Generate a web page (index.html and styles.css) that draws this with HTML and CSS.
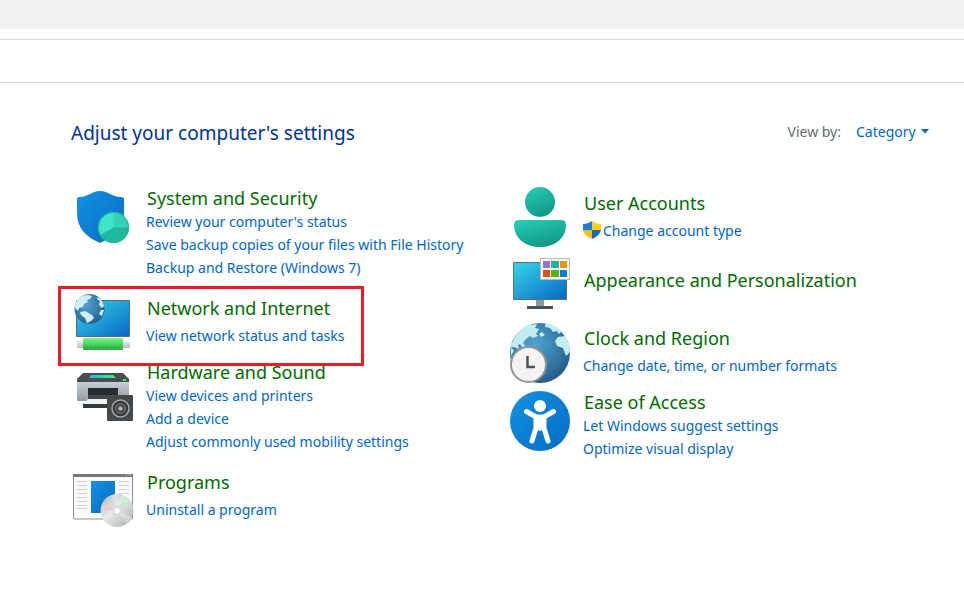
FILE: index.html
```html
<!DOCTYPE html>
<html lang="en">
<head>
    <meta charset="UTF-8">
    <meta name="viewport" content="width=device-width, initial-scale=1.0">
    <title>Control Panel</title>
    <link rel="stylesheet" href="styles.css">
</head>
<body>
    <div class="titlebar"></div>
    <div class="addressbar"></div>

    <main class="content">
        <header class="page-header">
            <h1>Adjust your computer's settings</h1>
            <div class="view-by">
                <label for="viewBy">View by:</label>
                <span class="select-wrap">
                    <select id="viewBy">
                        <option>Category</option>
                    </select>
                    <svg class="arrow" viewBox="0 0 8 5"><path d="M0 0h8L4 4.500z" fill="#0066cc"/></svg>
                </span>
            </div>
        </header>

        <div class="categories">
            <div class="column">
                <section class="category list">
                    <svg class="icon" viewBox="0 0 64 64">
                        <defs>
                            <linearGradient id="shieldBlue" x1="0" y1="0" x2="1" y2="1">
                                <stop offset="0" stop-color="#1493e2"/><stop offset="1" stop-color="#0669c3"/>
                            </linearGradient>
                            <clipPath id="pie"><circle cx="42.500" cy="43.500" r="15.500"/></clipPath>
                        </defs>
                        <path d="M6 15q0-2 2-2c10 0 12-6 21-6s11 6 21 6q3 0 3 2v14c0 15-10 24-24 30C15 53 6 44 6 29z" fill="url(#shieldBlue)"/>
                        <g clip-path="url(#pie)">
                            <rect x="26" y="27" width="33" height="33" fill="#3fe5c9"/>
                            <path d="M42.500 27v17H60V27z" fill="#35d2b7"/>
                            <path d="M26 53l16.500-9.500H60V61H26z" fill="#20b89f"/>
                        </g>
                        <circle cx="42.500" cy="43.500" r="15" fill="none" stroke="#25b59e"/>
                    </svg>
                    <div class="text">
                        <h2><a href="#">System and Security</a></h2>
                        <a href="#">Review your computer's status</a>
                        <a href="#">Save backup copies of your files with File History</a>
                        <a href="#">Backup and Restore (Windows 7)</a>
                    </div>
                </section>

                <section class="category highlighted">
                    <svg class="icon" viewBox="0 0 64 64">
                        <defs>
                            <linearGradient id="screen" x1="0" y1="0" x2="1" y2="1">
                                <stop offset="0" stop-color="#36d5e8"/><stop offset="1" stop-color="#0868c5"/>
                            </linearGradient>
                            <radialGradient id="globe" cx=".4" cy=".35" r=".7">
                                <stop offset="0" stop-color="#4fa3d0"/><stop offset=".6" stop-color="#357ca9"/><stop offset="1" stop-color="#225a83"/>
                            </radialGradient>
                            <linearGradient id="cable" x1="0" y1="0" x2="0" y2="1">
                                <stop offset="0" stop-color="#7cf08b"/><stop offset=".5" stop-color="#48d85c"/><stop offset="1" stop-color="#2fa943"/>
                            </linearGradient>
                            <linearGradient id="plug" x1="0" y1="0" x2="0" y2="1">
                                <stop offset="0" stop-color="#fff"/><stop offset="1" stop-color="#b9bcbc"/>
                            </linearGradient>
                        </defs>
                        <rect x="5" y="11" width="54" height="37" rx="1" fill="#587078"/>
                        <rect x="6" y="12" width="52" height="35" fill="url(#screen)"/>
                        <rect x="6" y="50" width="53" height="9" rx="1" fill="url(#plug)"/>
                        <rect x="12" y="49" width="40" height="12" rx="1" fill="url(#cable)"/>
                        <path d="M15 58h34" stroke="#2a9d3c" stroke-dasharray="2 2"/>
                        <circle cx="18.500" cy="20" r="15" fill="url(#globe)"/>
                        <path d="M4 19c0-6 3-10 8-12.500l5-.5 4 1-2 3-3 1 1 2-4 2-1 3-4 1-1 3zM9 23l5-1 7 4 2 3-3 3-4 2-2-5-4-3zM27 8c3 2 5 5 6 9l-2 2-3-3 1-4-3-2zM30 21l3 0-2 6-3-2z" fill="#d1eff8"/>
                    </svg>
                    <div class="text">
                        <h2><a href="#">Network and Internet</a></h2>
                        <a href="#">View network status and tasks</a>
                    </div>
                </section>

                <section class="category list">
                    <svg class="icon" viewBox="0 0 64 64">
                        <defs>
                            <linearGradient id="printerGlow"><stop offset="0" stop-color="#29b5dd"/><stop offset="1" stop-color="#43eb76"/></linearGradient>
                            <linearGradient id="printerBody" x1="0" y1="0" x2="0" y2="1"><stop offset="0" stop-color="#c7cdd2"/><stop offset="1" stop-color="#929ba3"/></linearGradient>
                        </defs>
                        <path d="M12 15h40l6 6v4H6v-4z" fill="#4a4e51"/>
                        <path d="M20 17h22l3 3H18z" fill="url(#printerGlow)"/>
                        <rect x="52" y="21" width="3" height="2" fill="#43ea60"/>
                        <path d="M6 24h52v18q0 1-1 1H7q-1 0-1-1z" fill="url(#printerBody)"/>
                        <path d="M17 30h30v12H17z" fill="#272c30"/>
                        <path d="M17 37h30v6H17z" fill="#42484c"/>
                        <path d="M12 45h36v5H12z" fill="#34393d"/>
                        <path d="M17 41h30v5H12z" fill="#eef0f1"/>
                        <rect x="36" y="37" width="26" height="26" rx="1" fill="#44484b"/>
                        <circle cx="49.500" cy="50.500" r="8.500" fill="#34383a" stroke="#a7abad" stroke-width="1.500"/>
                        <circle cx="49.500" cy="50.500" r="5" fill="#4a4f52" stroke="#73787b"/>
                        <circle cx="49.500" cy="50.500" r="2" fill="#b8bdbf"/>
                    </svg>
                    <div class="text">
                        <h2><a href="#">Hardware and Sound</a></h2>
                        <a href="#">View devices and printers</a>
                        <a href="#">Add a device</a>
                        <a href="#">Adjust commonly used mobility settings</a>
                    </div>
                </section>

                <section class="category">
                    <svg class="icon" viewBox="0 0 64 64">
                        <defs>
                            <linearGradient id="disc" x1="0" y1="0" x2="1" y2="1"><stop offset="0" stop-color="#b3b6b7"/><stop offset=".45" stop-color="#e7e9e9"/><stop offset="1" stop-color="#a8abac"/></linearGradient>
                        </defs>
                        <rect x="2.500" y="12" width="59" height="44" rx="1" fill="#fafafa" stroke="#909090"/>
                        <path d="M2 11h60v3H2z" fill="#777"/>
                        <path d="M55 12h1m1 0h1m1 0h1" stroke="#ddd"/>
                        <path d="M6 18.500h10M6 22.500h10M6 26.500h10M6 30.500h10M6 34.500h10M6 38.500h10M6 42.500h10M6 45.500h10M48 18.500h10M48 22.500h10M48 26.500h10M48 30.500h10" stroke="#cfcfcf"/>
                        <path d="M20 18h24v32H20z" fill="url(#shieldBlue)"/>
                        <circle cx="46" cy="47.500" r="16.500" fill="url(#disc)"/>
                        <path d="M46 47L55 33l4 5z" fill="#c8ecd0"/>
                        <path d="M46 47L31 42l-1 5z" fill="#efc9ce"/>
                        <path d="M46 47l-6-15 7-1zM46 48l10 12 5-6z" fill="#eee" opacity=".5"/>
                        <circle cx="46" cy="47.500" r="5" fill="#ddd"/>
                        <circle cx="46" cy="47.500" r="2.500" fill="#fff"/>
                    </svg>
                    <div class="text">
                        <h2><a href="#">Programs</a></h2>
                        <a href="#">Uninstall a program</a>
                    </div>
                </section>
            </div>

            <div class="column">
                <section class="category">
                    <svg class="icon" viewBox="0 0 64 64">
                        <defs>
                            <linearGradient id="user" x1="0" y1="0" x2=".5" y2="1"><stop offset="0" stop-color="#29cfb9"/><stop offset="1" stop-color="#109a87"/></linearGradient>
                        </defs>
                        <circle cx="32" cy="18" r="15" fill="url(#user)"/>
                        <path d="M11 36h42q5 0 5 5c0 14-12 22-26 22S6 55 6 41q0-5 5-5z" fill="url(#user)"/>
                    </svg>
                    <div class="text">
                        <h2><a href="#">User Accounts</a></h2>
                        <a href="#" class="admin"><svg class="uac" viewBox="0 0 18 18">
                                <path d="M9 0C6 2 3 3 0 3v6h9z" fill="#1e7fd7"/>
                                <path d="M9 0c3 2 6 3 9 3v6H9z" fill="#ffcf1c"/>
                                <path d="M0 9h9v9C4 16 1 13 0 9z" fill="#ffbe14"/>
                                <path d="M9 9h9c-1 4-4 7-9 9z" fill="#1669c0"/>
                            </svg>Change account type</a>
                    </div>
                </section>

                <section class="category title-only">
                    <svg class="icon" viewBox="0 0 64 64">
                        <rect x="5" y="9" width="54" height="38" rx="1" fill="#587078"/>
                        <rect x="6" y="10" width="52" height="36" fill="url(#screen)"/>
                        <path d="M28 47h8v6h-8z" fill="#8b979f"/>
                        <path d="M19 53h26v3H19z" fill="#495157"/>
                        <rect x="32.500" y="5.500" width="29" height="21" fill="#fafafa" stroke="#b9b9b9"/>
                        <path d="M35 8h7v7h-7z" fill="#a370d8"/>
                        <path d="M43 8h8v7h-8z" fill="#1cb49e"/>
                        <path d="M52 8h7v7h-7z" fill="#f5920d"/>
                        <path d="M35 17h7v7h-7z" fill="#df4f17"/>
                        <path d="M43 17h8v7h-8z" fill="#58b510"/>
                        <path d="M52 17h7v7h-7z" fill="#087bd6"/>
                    </svg>
                    <div class="text">
                        <h2><a href="#">Appearance and Personalization</a></h2>
                    </div>
                </section>

                <section class="category">
                    <svg class="icon" viewBox="0 0 64 64">
                        <circle cx="32" cy="34" r="30" fill="url(#globe)"/>
                        <path d="M5 22C8 15 13 9 20 6l9-1-2 4 4 1-3 5 2 2-5 2-3-2-4 3-3 4 3 4-3 1-3-4-2 1 1 4-5-2-5 1zM37 5c7 0 12 2 17 7l-3 3-2-3-4 1-3-4-5-1zM50 18l7-1c3 5 5 10 5 16l-4 4-3-8-6-2-2-5zM31 15l3-2 3 3-4 2zM3 29l3 2-3 6z" fill="#c3edf4"/>
                        <circle cx="20.500" cy="45.500" r="17.500" fill="#f3f3f3" stroke="#929496" stroke-width="2"/>
                        <path d="M19.500 37v11H27" fill="none" stroke="#505356" stroke-width="2.500"/>
                    </svg>
                    <div class="text">
                        <h2><a href="#">Clock and Region</a></h2>
                        <a href="#">Change date, time, or number formats</a>
                    </div>
                </section>

                <section class="category list">
                    <svg class="icon" viewBox="0 0 64 64">
                        <circle cx="32" cy="33" r="30" fill="url(#shieldBlue)"/>
                        <circle cx="32" cy="18" r="6" fill="#fff"/>
                        <path d="M18.500 23.500L28 29h8l9.500-5.500M28 31v9l-4 13M36 31v9l4 13" fill="none" stroke="#fff" stroke-width="5" stroke-linecap="round" stroke-linejoin="round"/>
                        <path d="M27 27h10v14l-5 2-5-2z" fill="#fff"/>
                    </svg>
                    <div class="text">
                        <h2><a href="#">Ease of Access</a></h2>
                        <a href="#">Let Windows suggest settings</a>
                        <a href="#">Optimize visual display</a>
                    </div>
                </section>
            </div>
        </div>
    </main>
</body>
</html>
```
FILE: styles.css
```css
* {
    box-sizing: border-box;
}
body {
    margin: 0;
    background-color: #fff;
    font-family: "Noto Sans", "Open Sans", sans-serif;
    font-size: 14px;
    line-height: 23px;
}
h1, h2 {
    margin: 0;
    font-weight: normal;
}
a {
    color: #0066cc;
    text-decoration: none;
}
a:hover {
    text-decoration: underline;
}

/* window chrome */
.titlebar {
    height: 29px;
    background-color: #f2f2f2;
}
.addressbar {
    height: 44px;
    margin-top: 10px;
    border-top: 1px solid #d9d9d9;
    border-bottom: 1px solid #d9d9d9;
}

.content {
    padding: 36px 34px 36px 71px;
}
.page-header {
    display: flex;
    justify-content: space-between;
    align-items: flex-start;
    margin-bottom: 37px;
}
.page-header h1 {
    color: #003399;
    font-size: 19px;
    line-height: 28px;
}
.view-by {
    display: flex;
    align-items: center;
    gap: 15px;
    padding-top: 1px;
    color: #5f6b75;
}
.select-wrap {
    position: relative;
    display: flex;
}
.view-by select {
    appearance: none;
    width: 74px;
    padding: 0;
    border: none;
    background: none;
    color: #0066cc;
    font: inherit;
    cursor: pointer;
}
.arrow {
    position: absolute;
    right: 1px;
    top: 9px;
    width: 8px;
    height: 5px;
    pointer-events: none;
}

/* category list */
.categories {
    display: grid;
    grid-template-columns: 1fr 1fr;
    gap: 15px;
}
.category {
    display: flex;
    align-items: center;
    gap: 11px;
    width: fit-content;
    margin-bottom: 5px;
}
.category.list {
    align-items: flex-start;
    margin-bottom: 10px;
}
.category.title-only {
    margin-bottom: 2px;
}
.icon {
    flex: none;
    width: 64px;
    height: 64px;
}
.text {
    display: flex;
    flex-direction: column;
    align-items: flex-start;
    padding-bottom: 2px;
    white-space: nowrap;
}
.list .text {
    padding-bottom: 0;
}
.text h2 {
    margin-bottom: 2px;
    padding-left: 1px;
    font-size: 18px;
    line-height: 28px;
}
.text h2 a {
    color: #006b00;
}
.list h2 {
    margin-bottom: -2px;
}
.title-only h2 {
    margin-bottom: 8px;
}
.admin {
    display: flex;
    align-items: center;
    gap: 2px;
}
.uac {
    width: 18px;
    height: 18px;
}

.highlighted {
    position: relative;
}
.highlighted::after {
    content: "";
    position: absolute;
    inset: -3px -20px -13px -13px;
    border: 3px solid #ed1c24;
    pointer-events: none;
}
```
